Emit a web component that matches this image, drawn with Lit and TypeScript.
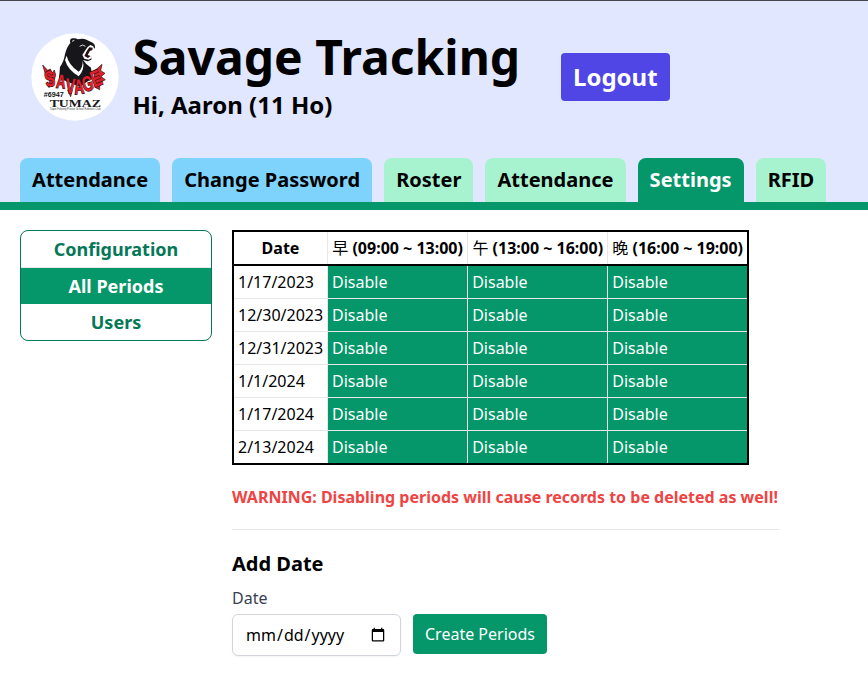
import { LitElement, html, css, svg } from "lit";
import { customElement } from "lit/decorators.js";
import { classMap } from "lit/directives/class-map.js";

const tabs = [
  { label: "Attendance", kind: "sky" },
  { label: "Change Password", kind: "sky" },
  { label: "Roster", kind: "mint" },
  { label: "Attendance", kind: "mint" },
  { label: "Settings", kind: "active" },
  { label: "RFID", kind: "mint" },
];

const sections = ["Configuration", "All Periods", "Users"];

const periods = [
  { name: "早", hours: "(09:00 ~ 13:00)" },
  { name: "午", hours: "(13:00 ~ 16:00)" },
  { name: "晚", hours: "(16:00 ~ 19:00)" },
];

const dates = ["1/17/2023", "12/30/2023", "12/31/2023", "1/1/2024", "1/17/2024", "2/13/2024"];

const savage = [
  { ch: "S", x: 95, y: 184, r: -12, s: 66 },
  { ch: "A", x: 122, y: 189, r: 6, s: 58 },
  { ch: "V", x: 151, y: 205, r: 4, s: 64 },
  { ch: "A", x: 180, y: 206, r: -6, s: 62 },
  { ch: "G", x: 209, y: 197, r: -14, s: 64 },
  { ch: "E", x: 238, y: 182, r: -22, s: 68 },
];

@customElement("team-logo")
class TeamLogo extends LitElement {
  static styles = css`
    :host { display: block; width: 88px; height: 88px; flex: none; }
    svg { display: block; width: 100%; height: 100%; }
    .brush { font-family: "Liberation Sans", sans-serif; font-weight: 700; fill: #e01f2b; stroke: #2a1012; stroke-width: 4px; paint-order: stroke; text-anchor: middle; }
    .number { font: 700 21px "Liberation Sans", sans-serif; fill: #111; }
    .team { font: 700 30px "Liberation Serif", serif; fill: #16161c; }
    .school { font: 8px "Liberation Sans", sans-serif; fill: #444; }
  `;
  render() {
    return html`<svg viewBox="34 24 264 264" aria-label="Savage">
      <circle cx="166" cy="156" r="131" fill="#fff"></circle>
      <path fill="#17171b" d="M152 54 Q148 40 160 40 Q169 38 174 43 Q190 38 202 45 L219 53 Q227 58 226 68 L223 72 Q213 66 204 76 L196 88 L205 96 L211 98 L216 94 L215 104 L204 109 L190 105 Q200 120 214 128 L218 160 L180 185 L118 160 L121 126 Q132 112 136 88 Q141 66 152 54Z"></path>
      <path fill="#fff" d="M141 92 Q147 120 177 140 Q190 128 189 107 Q197 131 177 154 Q144 134 136 105Z"></path>
      <path fill="#fff" d="M197 76 L204 66 L212 60 L221 64 L224 74 L220 88 L216 77 L210 78 L202 91 L208 94 L217 91 L216 99 L207 104 L194 101 L188 90Z"></path>
      <path fill="#241014" d="M202 77 L209 67 L219 68 L218 76 L211 77 L204 90 L213 93 L205 99 L194 93Z"></path>
      <path fill="none" stroke="#fff" stroke-width="2.5" d="M180 64 L189 60 L197 64 M157 49 L164 46"></path>
      <path fill="#d8222c" stroke="#2a1012" stroke-width="2" d="M69 120 L84 136 L92 132 L98 144 L104 135 L108 150 L100 180 L87 187 L90 168 L78 150Z M224 138 L247 118 L243 137 L256 145 L244 155 L257 164 L240 174 L240 194 L226 187Z M158 195 L153 215 L144 195Z"></path>
      ${savage.map(
        (l) => svg`<text class="brush" font-size=${l.s} transform="translate(${l.x} ${l.y}) rotate(${l.r}) scale(.66 1)">${l.ch}</text>`
      )}
      <text class="number" x="72" y="216" textLength="60" lengthAdjust="spacingAndGlyphs">#6947</text>
      <text class="team" x="90" y="245" textLength="154" lengthAdjust="spacingAndGlyphs">TUMAZ</text>
      <text class="school" x="90" y="256" textLength="153" lengthAdjust="spacingAndGlyphs">Taipei Fuhsing Private School Robotics Club</text>
    </svg>`;
  }
}

@customElement("app-root")
class AppRoot extends LitElement {
  static styles = css`
    :host { display: block; min-height: 686px; background: #fff; color: #000; font: 16px/24px "Noto Sans", "Noto Sans CJK TC", sans-serif; }
    * { box-sizing: border-box; }
    h1, h2, p { margin: 0; }
    button { font: inherit; border: 0; margin: 0; color: #fff; }
    .header { background: #e0e7ff; border-top: 1px solid #44444f; border-bottom: 8px solid #059669; height: 210px; display: flex; flex-direction: column; justify-content: space-between; }
    .brand { display: flex; align-items: center; padding: 32px 32px 0 31px; }
    .titles { margin-left: 13.4px; display: flex; flex-direction: column; gap: 8px; }
    h1 { font-size: 48px; line-height: 48px; font-weight: 700; white-space: nowrap; }
    .hello { font-size: 24px; line-height: 32px; font-weight: 700; }
    .logout { margin-left: 40.6px; width: 109px; height: 48px; padding: 8px 0; border-radius: 4px; background: #4f46e5; font-size: 24px; line-height: 32px; font-weight: 700; }
    .tabs { display: flex; gap: 12px; padding: 0 20px; }
    .tab { padding: 8px 12.06px; border-radius: 8px 8px 0 0; font-size: 20px; line-height: 28px; font-weight: 700; white-space: nowrap; }
    .sky { background: #7dd3fc; }
    .mint { background: #a7f3d0; }
    .active { background: #059669; color: #fff; }
    .main { display: flex; align-items: flex-start; gap: 20px; padding: 20px; }
    .side { width: 192px; border: 1px solid #047857; border-radius: 8px; overflow: hidden; text-align: center; font-size: 18px; line-height: 28px; font-weight: 700; color: #047857; }
    .item { padding: 4px; }
    .item:first-child { border-bottom: 1px solid #e5e7eb; }
    .item.current { background: #059669; color: #fff; }
    .content { width: 547px; }
    table { border-collapse: collapse; table-layout: fixed; width: 517px; border: 2px solid #000; }
    .col-date { width: 94.5px; }
    th, td { padding: 4px; height: 33px; border: 1px solid #e5e7eb; text-align: left; white-space: nowrap; line-height: 24px; }
    th { font-weight: 700; border-bottom: 2px solid #000; text-align: center; }
    .cjk { font-family: "Noto Sans CJK TC", sans-serif; font-weight: 400; line-height: 1; }
    .day { font-weight: 400; }
    .slot { background: #059669; color: #fff; }
    .warning { margin-top: 20px; color: #ef4444; font-weight: 700; white-space: nowrap; }
    .rule { border: 0; border-top: 1px solid #e5e7eb; margin: 20px 0; }
    h2 { font-size: 20px; line-height: 28px; font-weight: 700; }
    .label { display: block; margin-top: 8px; color: #374151; }
    .form { display: flex; gap: 12px; margin-top: 4px; }
    .date { width: 169px; height: 42px; margin: 0; padding: 8px 12px; border: 1px solid #d1d5db; border-radius: 6px; background: #fff; color: #000; font: inherit; box-shadow: 0 1px 2px rgba(0, 0, 0, .05); }
    .create { width: 134px; height: 40px; padding: 8px 0; border-radius: 4px; background: #059669; font-weight: 400; }
  `;
  render() {
    return html`
      <header class="header">
        <div class="brand">
          <team-logo></team-logo>
          <div class="titles">
            <h1>Savage Tracking</h1>
            <p class="hello">Hi, Aaron (11 Ho)</p>
          </div>
          <button class="logout">Logout</button>
        </div>
        <nav class="tabs">${tabs.map((t) => html`<div class="tab ${t.kind}">${t.label}</div>`)}</nav>
      </header>
      <main class="main">
        <nav class="side">
          ${sections.map((s) => html`<div class=${classMap({ item: true, current: s === "All Periods" })}>${s}</div>`)}
        </nav>
        <section class="content">
          <table>
            <colgroup><col class="col-date" /><col /><col /><col /></colgroup>
            <thead>
              <tr><th>Date</th>${periods.map((p) => html`<th><span class="cjk">${p.name}</span> ${p.hours}</th>`)}</tr>
            </thead>
            <tbody>
              ${dates.map((d) => html`<tr><td class="day">${d}</td>${periods.map(() => html`<td class="slot">Disable</td>`)}</tr>`)}
            </tbody>
          </table>
          <p class="warning">WARNING: Disabling periods will cause records to be deleted as well!</p>
          <hr class="rule" />
          <h2>Add Date</h2>
          <label class="label" for="date">Date</label>
          <div class="form">
            <input class="date" id="date" type="date" />
            <button class="create">Create Periods</button>
          </div>
        </section>
      </main>
    `;
  }
}
